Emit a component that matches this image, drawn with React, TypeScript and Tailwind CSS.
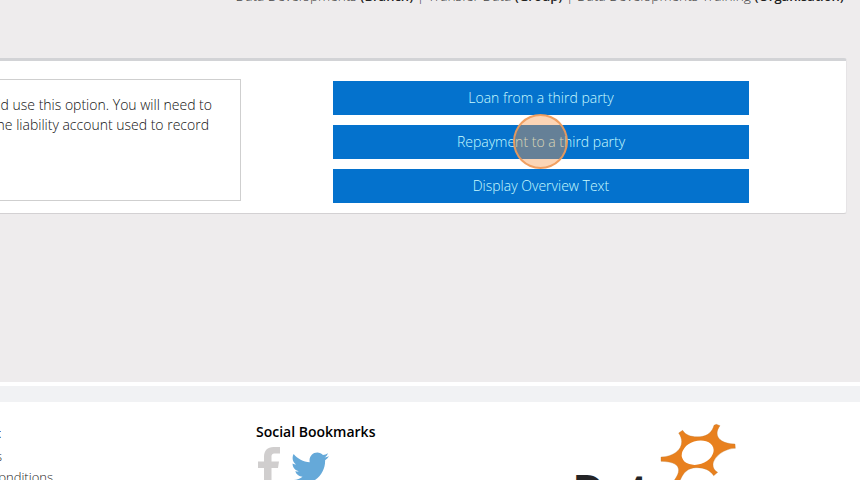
import { FaTwitter } from "react-icons/fa";

const actions = [
  "Loan from a third party",
  "Repayment to a third party",
  "Display Overview Text",
];

function Breadcrumb() {
  return (
    <div className="h-[58px] shrink-0 pr-4">
      <p className="-mt-[14px] whitespace-nowrap text-right text-[13.7px] leading-5 font-light text-[#444]">
        Data Developments <b className="text-[13px] font-semibold text-[#222]">(Branch)</b> | Transfer Data{" "}
        <b className="text-[13px] font-semibold text-[#222]">(Group)</b> | Data Developments Training{" "}
        <b className="text-[13px] font-semibold text-[#222]">(Organisation)</b>
      </p>
    </div>
  );
}

function ActionButton({ label, clicked }: { label: string; clicked?: boolean }) {
  return (
    <button className="relative flex h-[34px] w-full items-center justify-center bg-[#0472cd] pb-[2px] text-[14px] font-light text-[#c8fbff]">
      <span>{label}</span>
      {clicked && (
        <span className="absolute -top-[11px] left-[180px] size-[55px] rounded-full border-2 border-[#f09a5a]/90 bg-[#f79646]/40" />
      )}
    </button>
  );
}

function Panel() {
  return (
    <div className="mr-[13px] flex h-[156px] shrink-0 rounded-r-[3px] border-t-[3px] border-r border-b border-t-[#d2d3d6] border-r-[#e6e4e6] border-b-[#d3d1d3] bg-white">
      <div className="mt-[18px] h-[122px] w-[241px] border border-l-0 border-[#cfcfcf] pt-[15px] text-[14px] leading-5 font-light whitespace-nowrap text-[#111]">
        <div className="flex w-[212px] justify-end overflow-hidden">
          <p>did use this option. You will need to</p>
        </div>
        <div className="flex w-[209px] justify-end overflow-hidden">
          <p>the liability account used to record</p>
        </div>
      </div>
      <div className="mt-5 ml-[92px] flex w-[416px] flex-col gap-[10px]">
        {actions.map((label, i) => (
          <ActionButton key={label} label={label} clicked={i === 1} />
        ))}
      </div>
    </div>
  );
}

function FacebookMark() {
  return (
    <svg className="mt-[5px] ml-[2px] h-[38px] w-[22px]" viewBox="0 0 22 38" fill="#d0cece">
      <path d="M6 38V21H0V14.5H6V10C6 3.5 9.5 0 15.5 0H22V6.5H17C14 6.5 13.5 7.8 13.5 10V14.5H21L20 21H13.5V38Z" />
    </svg>
  );
}

function SunLogo() {
  return (
    <svg className="absolute top-[18px] left-[89px] h-[70px] w-[92px]" viewBox="290 30 276 210">
      <path
        fill="#e8801e"
        stroke="#bd7934"
        strokeWidth="1"
        d="M355 69L367 61C376 77 397 82 419 80C442 79 456 65 461 46L468 43L479 47C458 76 476 101 524 102L525 115C492 115 461 140 458 162C457 174 463 182 472 187L460 197C451 181 430 172 407 173C381 174 367 188 356 220L336 218C366 183 364 155 302 154L302 141C350 140 380 105 355 69Z"
      />
      <ellipse cx="412" cy="128" rx="49" ry="35" transform="rotate(-18 412 128)" fill="white" />
    </svg>
  );
}

function Footer() {
  return (
    <footer className="mt-1 border-t-[16px] border-[#f1f2f4] bg-white">
      <div className="flex h-[78px] overflow-hidden">
        <div className="w-64 pt-[21px] text-[13px] leading-5 font-light whitespace-nowrap text-[#222]">
          <div className="flex w-[1px] justify-end overflow-hidden">
            <b className="font-semibold">Support</b>
          </div>
          <div className="mt-[3px] flex w-[2px] justify-end overflow-hidden">
            <span>Contact Us</span>
          </div>
          <div className="mt-px flex w-[53px] justify-end overflow-hidden">
            <span>Terms and Conditions</span>
          </div>
        </div>
        <div className="w-[312px] pt-5">
          <h4 className="text-[14px] leading-5 font-semibold text-black">Social Bookmarks</h4>
          <div className="flex">
            <FacebookMark />
            <FaTwitter className="mt-[7px] ml-[11px] size-[38px] text-[#65a9d9]" />
          </div>
        </div>
        <div className="relative flex-1">
          <span className="absolute top-[64px] left-[5px] text-[42px] leading-[46px] font-extrabold text-[#242426]">
            Data
          </span>
          <SunLogo />
        </div>
      </div>
    </footer>
  );
}

export default function App() {
  return (
    <div className="h-[480px] w-[860px] overflow-hidden bg-white font-['Open_Sans',sans-serif]">
      <div className="flex h-[382px] flex-col overflow-hidden bg-[#eeeced]">
        <Breadcrumb />
        <Panel />
      </div>
      <Footer />
    </div>
  );
}
